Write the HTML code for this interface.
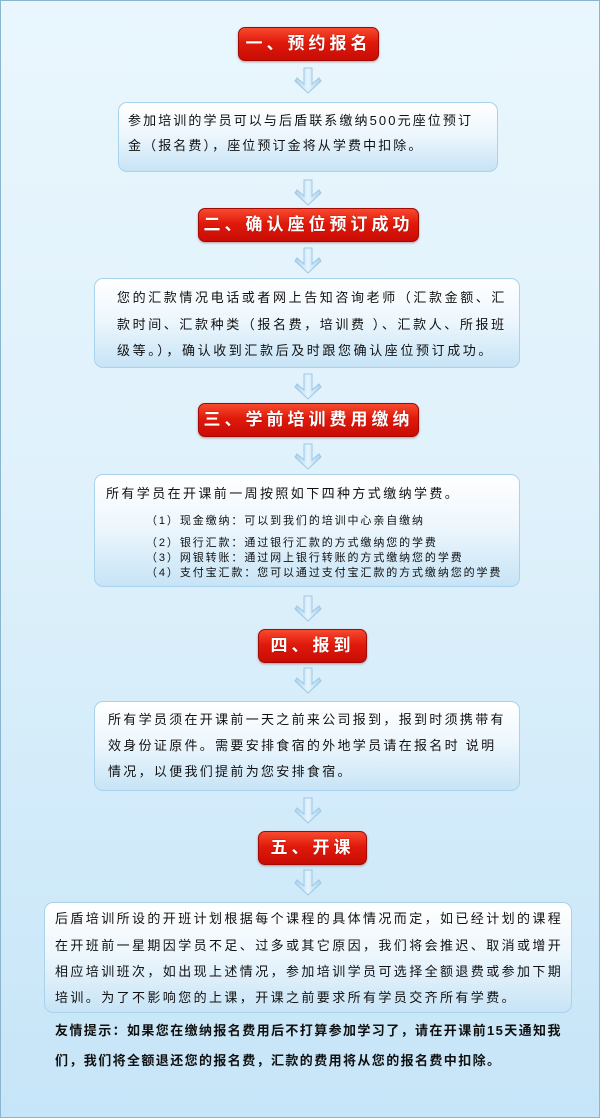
<!DOCTYPE html>
<html><head><meta charset="utf-8">
<style>
*{margin:0;padding:0;box-sizing:border-box}
body{width:600px;height:1118px;overflow:hidden;font-family:"Liberation Sans","Noto Sans CJK SC","WenQuanYi Zen Hei",sans-serif;color:#111}
#pg{position:absolute;left:0;top:0;width:600px;height:1118px;border:1px solid #8ab5cf;background:linear-gradient(#e9f6fd,#dff1fb 45%,#c6e5f8)}
.t{position:absolute;height:34px;border-radius:7px;background:linear-gradient(#f84a2e,#e01a0b 45%,#c80c05);border:1px solid #a30a04;color:#fff;font-weight:bold;font-size:17px;letter-spacing:4px;text-align:center;line-height:32px;box-shadow:0 1px 2px rgba(120,0,0,.4);text-shadow:0 0 1px #800}
.b{position:absolute;border:1px solid #a9d2ec;border-radius:9px;background:linear-gradient(#ffffff,#eef7fd 45%,#c7e4f6);white-space:nowrap}
.l{position:absolute;white-space:nowrap;font-size:13px;line-height:16px}
.s{font-size:11px;letter-spacing:1.9px}
svg.a{position:absolute;width:30px;height:30px}
</style></head><body><div id="pg">

<div class="t" style="left:237px;top:26px;width:141px">一、预约报名</div>
<div class="t" style="left:197px;top:207px;width:221px">二、确认座位预订成功</div>
<div class="t" style="left:197px;top:402px;width:221px">三、学前培训费用缴纳</div>
<div class="t" style="left:257px;top:628px;width:109px">四、报到</div>
<div class="t" style="left:257px;top:830px;width:109px">五、开课</div>

<div class="b" style="left:117px;top:101px;width:380px;height:70px"></div>
<div class="l" style="left:127px;top:112px;letter-spacing:2.1px">参加培训的学员可以与后盾联系缴纳500元座位预订</div>
<div class="l" style="left:127px;top:137px;letter-spacing:2.1px">金（报名费），座位预订金将从学费中扣除。</div>

<div class="b" style="left:93px;top:277px;width:426px;height:90px"></div>
<div class="l" style="left:116px;top:289px;letter-spacing:2.6px">您的汇款情况电话或者网上告知咨询老师（汇款金额、汇</div>
<div class="l" style="left:116px;top:316px;letter-spacing:2.6px">款时间、汇款种类（报名费，培训费&nbsp;）、汇款人、所报班</div>
<div class="l" style="left:116px;top:342px;letter-spacing:2.6px">级等。），确认收到汇款后及时跟您确认座位预订成功。</div>

<div class="b" style="left:93px;top:473px;width:426px;height:113px"></div>
<div class="l" style="left:105px;top:485px;letter-spacing:2.4px">所有学员在开课前一周按照如下四种方式缴纳学费。</div>
<div class="l s" style="left:145px;top:512px">（1）现金缴纳：可以到我们的培训中心亲自缴纳</div>
<div class="l s" style="left:145px;top:534px">（2）银行汇款：通过银行汇款的方式缴纳您的学费</div>
<div class="l s" style="left:145px;top:549px">（3）网银转账：通过网上银行转账的方式缴纳您的学费</div>
<div class="l s" style="left:145px;top:564px">（4）支付宝汇款：您可以通过支付宝汇款的方式缴纳您的学费</div>

<div class="b" style="left:93px;top:700px;width:426px;height:90px"></div>
<div class="l" style="left:107px;top:711px;letter-spacing:2.3px">所有学员须在开课前一天之前来公司报到，报到时须携带有</div>
<div class="l" style="left:107px;top:737px;letter-spacing:2.3px">效身份证原件。需要安排食宿的外地学员请在报名时&nbsp;说明</div>
<div class="l" style="left:107px;top:763px;letter-spacing:2.3px">情况，以便我们提前为您安排食宿。</div>

<div class="b" style="left:43px;top:901px;width:528px;height:111px"></div>
<div class="l" style="left:54px;top:910px;letter-spacing:2.4px">后盾培训所设的开班计划根据每个课程的具体情况而定，如已经计划的课程</div>
<div class="l" style="left:54px;top:937px;letter-spacing:2.4px">在开班前一星期因学员不足、过多或其它原因，我们将会推迟、取消或增开</div>
<div class="l" style="left:54px;top:963px;letter-spacing:2.4px">相应培训班次，如出现上述情况，参加培训学员可选择全额退费或参加下期</div>
<div class="l" style="left:54px;top:989px;letter-spacing:2.4px">培训。为了不影响您的上课，开课之前要求所有学员交齐所有学费。</div>

<div class="l" style="left:54px;top:1022px;font-weight:bold;letter-spacing:1.4px">友情提示：如果您在缴纳报名费用后不打算参加学习了，请在开课前15天通知我</div>
<div class="l" style="left:54px;top:1052px;font-weight:bold;letter-spacing:1.4px">们，我们将全额退还您的报名费，汇款的费用将从您的报名费中扣除。</div>

<svg width="0" height="0" style="position:absolute"><defs>
<linearGradient id="g" x1="0" x2="1"><stop offset="0" stop-color="#a8d3f0"/><stop offset=".5" stop-color="#e6f4fd"/><stop offset="1" stop-color="#a8d3f0"/></linearGradient>
<symbol id="ar" viewBox="0 0 30 30"><path d="M11 1H19V17L26 11L28 14L15 26L2 14L4 11L11 17Z" fill="url(#g)" stroke="#9cc8e8" stroke-width="1"/></symbol>
</defs></svg>
<svg class="a" style="left:292px;top:66px"><use href="#ar"/></svg>
<svg class="a" style="left:292px;top:178px"><use href="#ar"/></svg>
<svg class="a" style="left:292px;top:246px"><use href="#ar"/></svg>
<svg class="a" style="left:292px;top:372px"><use href="#ar"/></svg>
<svg class="a" style="left:292px;top:442px"><use href="#ar"/></svg>
<svg class="a" style="left:292px;top:594px"><use href="#ar"/></svg>
<svg class="a" style="left:292px;top:666px"><use href="#ar"/></svg>
<svg class="a" style="left:292px;top:796px"><use href="#ar"/></svg>
<svg class="a" style="left:292px;top:868px"><use href="#ar"/></svg>
</div></body></html>
